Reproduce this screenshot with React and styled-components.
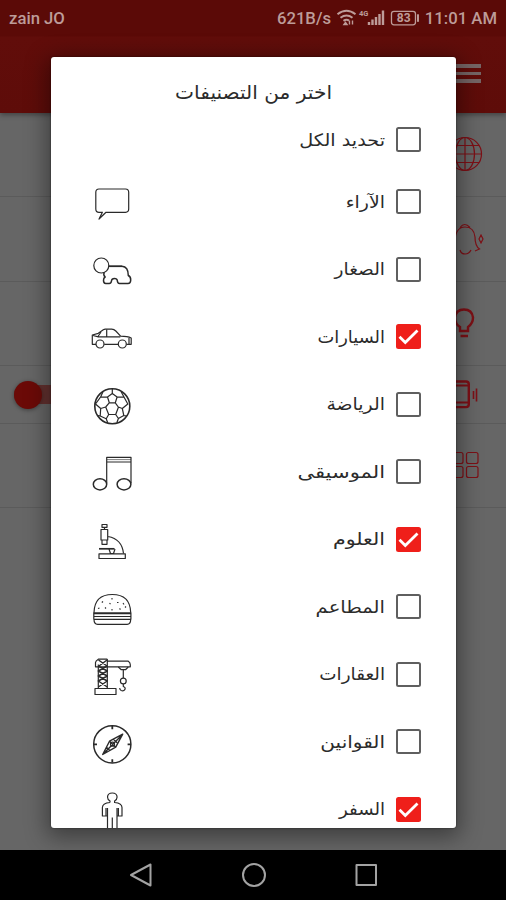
import React from 'react'
import styled, { createGlobalStyle } from 'styled-components'

const GlobalStyle = createGlobalStyle`
    * {
        box-sizing: border-box;
    }

    body {
        margin: 0;
        background: #666;
        overflow: hidden;
    }
`

const categories = [
    { id: 1, label: 'الآراء', icon: 'chat', scale: 1.11 },
    { id: 2, label: 'الصغار', icon: 'bear', scale: 1.09 },
    { id: 3, label: 'السيارات', icon: 'car', checked: true, scale: 1.05 },
    { id: 4, label: 'الرياضة', icon: 'ball', scale: 1.11 },
    { id: 5, label: 'الموسيقى', icon: 'music', scale: 1.24 },
    { id: 6, label: 'العلوم', icon: 'microscope', checked: true, scale: 1.21 },
    { id: 7, label: 'المطاعم', icon: 'burger', scale: 1.15 },
    { id: 8, label: 'العقارات', icon: 'crane', scale: 1.08 },
    { id: 9, label: 'القوانين', icon: 'compass', scale: 1.18 },
    { id: 10, label: 'السفر', icon: 'person', checked: true, scale: 1.07 },
]

const drawings = {
    chat: <path d="M9 7h26.5q3.2 0 3.2 3.2v16.9q0 3.2-3.2 3.2H16L9 37l3.4-6.7H9q-3.2 0-3.2-3.2V10.2q0-3.2 3.2-3.2z" />,
    bear: (
        <>
            <circle cx="11.3" cy="16.5" r="7.5" />
            <path d="M18.8 17.2H32" strokeWidth="1.8" />
            <path d="M32 17.2q6.3.5 6.3 9.3 2.6 1.2 2.4 4.7-.2 3.3-2.7 3.3h-8.500q-2 0-2.200-3-.3-2-2.800-2-2.800 0-3 2.300-.2 2.700-2.300 2.700h-3.500q-2.200 0-2.200-3.200 0-2.500 1.700-3.300-2.200-2-1-4.500" strokeWidth="1.500" />
        </>
    ),
    car: (
        <>
            <path d="M6 27.3H2.300V18l6-1.700 5-3.500q1-.6 2-.6h6.500q2.200 0 4 1.800l4.800 5.200q7 .2 10.600 1.800v6.300h-4.700M14.200 27.300h14" />
            <path d="M3 18.5l5.300 1.300h22M16.700 12.500v7.300M11 15l-3 4.500M39 21v6" />
            <circle cx="10" cy="27" r="4" />
            <circle cx="32.3" cy="27" r="4" />
        </>
    ),
    ball: (
        <>
            <circle cx="22.3" cy="22.200" r="17.500" strokeWidth="1.600" />
            <path d="M22.300 9.500l4.800 3.500-1.800 5.800h-6l-1.800-5.800zM22.300 9.500V4.800M27.100 13l7 .2 3.700 6.800-5.500 4.500-4-1.500-3-4.200M17.500 13l-7 .2L5.500 20l5.200 4.500 5-1.500 3.500-4.200M15.700 23l3 7.500h7l2.800-7.500M18.700 30.500l-2.500 4.200 1.500 4M25.700 30.500l2.700 4-1.500 4M10.700 24.500l-.5 7.500 6 2.700M32.300 24.500l1.500 7-5.400 3M10.500 13.200l2.500-5.500M34.100 13.200L31 7.500M10.200 32l-2.400-.3M33.800 31.500l2.600.3" />
        </>
    ),
    music: (
        <>
            <path d="M16.700 31.500V5.300H41v26M16.700 10H41" />
            <path d="M17 7.600h24" strokeWidth=".6" />
            <ellipse cx="10" cy="32.300" rx="6.700" ry="5.600" strokeWidth="1.500" />
            <ellipse cx="34" cy="32.300" rx="6.900" ry="5.600" strokeWidth="1.500" />
        </>
    ),
    microscope: (
        <>
            <path d="M12 5.500h5v2.800h-5zM11 10.500h6.700V21H11zM12 21h5v4.300h-5zM14.500 8v2.500M18 17.500q14 2.500 15.500 17" />
            <path d="M9 29.800h15.500" strokeWidth="1.700" />
            <path d="M19 30l1.500 4.500h3L25 30M9 34.800h26.300v4.700H9z" />
        </>
    ),
    burger: (
        <>
            <path d="M4 25.500Q4.500 7.500 22.300 7.500T40.700 25.500M4 32.300q0 5 3.600 5h29.500q3.600 0 3.600-5M4.200 32.300h36.500M4 29.500h36.700M3.800 25.500v7M40.900 25.500v7" />
            <path d="M3.800 26.300h37.200" strokeWidth="1.900" />
            <path d="M22 11v1.600M13 14.500l-1.200 1M19.500 16l1 1.200M27 15.500h1.500M33 16l1 1.500M8 21.500l1.500-.5M15 20.500l1 1M22 22v1.500M29.500 21.500l1 1M35 20.500l1-1" strokeWidth="1.100" />
        </>
    ),
    crane: (
        <>
            <path d="M8.300 34V10.500M17.300 34V5M5 34.500h21v6H5zM17.300 7.200h21q2 1.300 2 3.500v2.100H5.500V8.500q0-1.600 2.800-3.300h9" />
            <path d="M8.300 12l9 5-9 5 9 5-9 6M17.300 12l-9 5 9 5-9 5 9 6M8.500 6l8.500 6M17 6l-8 6" strokeWidth="1.500" />
            <path d="M28.300 13l3 2.700h4.200l2.800-2.700M33.300 16v8M33.300 30v2.500q2.700 1 1.500 3.200-1.200 1.700-3.600.8-1.500-.7-1.500-2.500" />
            <circle cx="33.300" cy="27" r="2.900" />
        </>
    ),
    compass: (
        <>
            <circle cx="22.300" cy="22.300" r="18.600" strokeWidth="1.500" />
            <path d="M12.700 32.500L19.500 19.200 32.700 12.200l-7 13zM12.700 32.500l20-20.300M19.500 19.200l6.200 6M16.500 25.200l3 3M23.500 17.200l3.500 3.500" strokeWidth="1.400" />
            <circle cx="22.500" cy="22.200" r="2" />
            <path d="M22.300 4v3.300M22.300 37.300v3.300M3.700 22.300H7M37.600 22.300h3.300" strokeWidth="1.800" />
        </>
    ),
    person: (
        <path d="M20 13.500V12q-2.500-1.500-2.500-4 .3-4 4.800-4t4.800 4q0 2.500-2.500 4v1.500q7.400.6 7.400 5v8.500h-3.600V19M20 13.500q-7.600.6-7.600 5V27H16V19M17.500 19v27M22.300 28.500v17M27 19v27M12.400 27h5M27 27h5" />
    ),
}

const CategoryIcon = ({ name }) => (
    <IconBox viewBox="0 0 44 44">{drawings[name]}</IconBox>
)

const Checkbox = ({ checked }) => (
    <Box $checked={checked}>
        {checked && (
            <svg width="25" height="25" viewBox="0 0 25 25" fill="none" stroke="#fff" strokeWidth="2.8">
                <path d="M3.5 12.800l5.800 5.800L21.500 6.500" />
            </svg>
        )}
    </Box>
)

const StatusIcons = () => (
    <svg width="86" height="22" viewBox="0 0 86 22" fill="none" stroke="#bd9c99">
        {/* wifi */}
        <path d="M1.500 7.200Q10.500.2 19.500 7.200M4.500 10.700q6-4.500 12 0M7.500 13.900q3-2.200 5.500-.3" strokeWidth="2" />
        <path d="M8 17.500l1.500-2 1.500 2zM13.500 13.500v4M16.500 13.500v4" strokeWidth="1.400" />
        {/* signal */}
        <path d="M33 18v-3M36.500 18v-5.500M40 18v-8M43.500 18V7M47 18V3.500" strokeWidth="2.400" />
        {/* battery */}
        <rect x="55.500" y="4.300" width="24" height="13.500" rx="2.500" strokeWidth="1.300" />
        <path d="M82 7.300v7.500" strokeWidth="2" />
        <text x="23" y="9" fontSize="7.500" fontWeight="700" fontFamily="Roboto" fill="#bd9c99" stroke="none">4G</text>
        <text x="60.800" y="15.400" fontSize="12" fontWeight="700" fontFamily="Roboto" fill="#bd9c99" stroke="none">83</text>
    </svg>
)

const App = () => {
    return (
        <>
            <GlobalStyle />
            <Screen>
                <Header>
                    <StatusBar>
                        <Carrier>zain JO</Carrier>
                        <Speed>621B/s</Speed>
                        <StatusIcons />
                        <Clock>11:01 AM</Clock>
                    </StatusBar>
                    <Toolbar>
                        <Burger><i /><i /><i /></Burger>
                    </Toolbar>
                </Header>

                {/* Settings list behind the dialog */}

                <Setting $h={84}>
                    <SettingIcon viewBox="0 0 36 40">
                        <circle cx="17" cy="19" r="16.500" />
                        <ellipse cx="17" cy="19" rx="9.500" ry="16.500" />
                        <path d="M17 2.500v33M.5 19h33M3 10.500h28M3 27.500h28" />
                    </SettingIcon>
                </Setting>
                <Setting $h={84}>
                    <SettingIcon viewBox="0 0 36 40">
                        <path d="M4 31q3-4 3-10Q8 8 17 8q9 0 10 10 0 9 4.500 12L27 32M12 8.500q4.500-6 10 0M12 31q1 4 5 4t6-4M33 16l2 4-2 4-2-4z" />
                    </SettingIcon>
                </Setting>
                <Setting $h={84}>
                    <SettingIcon viewBox="0 0 36 40" $bold>
                        <path d="M12 28v-4q-5-3-5-9.500Q8 6.500 16 6.500t9 8Q25 20.500 20 24v4zM12.500 33h7.500" />
                    </SettingIcon>
                </Setting>
                <Setting $h={58}>
                    <SettingIcon viewBox="0 0 36 40" $bold>
                        <path d="M5 6.500h13q2.800 0 2.800 2.800v20q0 2.800-2.800 2.800H5z" />
                        <path d="M5 10.500h15M5 27.500h15" strokeWidth="1.800" />
                        <path d="M25.500 16v8M28.500 13.500v13" strokeWidth="1.600" />
                    </SettingIcon>
                    <Switch><Knob /></Switch>
                </Setting>
                <Setting $h={84}>
                    <SettingIcon viewBox="0 0 36 40">
                        <rect x="4" y="6.500" width="11" height="11" rx="2" />
                        <rect x="18.500" y="6.500" width="11.500" height="11" rx="2" />
                        <rect x="4" y="20.500" width="11" height="11" rx="2" />
                        <rect x="18.500" y="20.500" width="11.500" height="11" rx="2" />
                    </SettingIcon>
                </Setting>
                <Filler />

                <NavBar>
                    <svg width="24" height="26" viewBox="0 0 24 26"><path d="M21.500 2.500v21L2 13z" /></svg>
                    <svg width="26" height="26" viewBox="0 0 26 26"><circle cx="13" cy="13" r="11" /></svg>
                    <svg width="24" height="26" viewBox="0 0 24 26"><rect x="2.500" y="3" width="19.500" height="20" /></svg>
                </NavBar>

                <Dialog>
                    <Title><Label $scale={1.06}>اختر من التصنيفات</Label></Title>
                    <SelectAll>
                        <Checkbox />
                        <Label $scale={1.13}>تحديد الكل</Label>
                    </SelectAll>
                    {categories.map((val) => (
                        <Row key={val.id}>
                            <Checkbox checked={val.checked} />
                            <Label $scale={val.scale}>{val.label}</Label>
                            <CategoryIcon name={val.icon} />
                        </Row>
                    ))}
                </Dialog>
            </Screen>
        </>
    )
}

const Screen = styled.div`
    position: relative;
    display: flex;
    flex-direction: column;
    width: 506px;
    height: 900px;
    overflow: hidden;
    background: #666;
    direction: rtl;
    font-family: "DejaVu Sans", sans-serif;
`

const Header = styled.header`
    height: 113px;
    flex-shrink: 0;
    background: linear-gradient(#5b0a07 0, #5b0a07 36px, #610d0a 37px, #5e0c09 100%);
    box-shadow: 0 2px 5px rgba(0, 0, 0, 0.35);
`

const StatusBar = styled.div`
    display: flex;
    align-items: center;
    height: 36px;
    padding: 0 9px;
    direction: ltr;
    color: #bd9c99;
    font-family: Roboto, sans-serif;
    font-size: 16.700px;
    font-weight: 500;
    white-space: nowrap;
`

const Carrier = styled.span`
    width: 268px;
`

const Speed = styled.span`
    width: 59px;
`

const Clock = styled.span`
    margin-left: 3px;
`

const Toolbar = styled.div`
    display: flex;
    padding: 28px 25px;
`

const Burger = styled.div`
    display: flex;
    flex-direction: column;
    gap: 4px;
    width: 32px;

    i {
        height: 3.500px;
        background: #756565;
    }
`

const Setting = styled.div`
    display: flex;
    align-items: center;
    justify-content: space-between;
    flex-shrink: 0;
    height: ${(props) => props.$h + 0.3}px;
    padding: 0 22px 0 14px;
    border-bottom: 1px solid #5b5b5b;
`

const SettingIcon = styled.svg`
    width: 36px;
    height: 40px;
    fill: none;
    stroke: #7d1016;
    stroke-width: ${(props) => (props.$bold ? 2.4 : 1.2)};
`

const Switch = styled.div`
    width: 48px;
    height: 19px;
    border-radius: 10px;
    background: #653230;
    display: flex;
    align-items: center;
    justify-content: flex-end;
`

const Knob = styled.div`
    width: 28px;
    height: 28px;
    border-radius: 50%;
    background: #6b0a07;
    box-shadow: 0 1px 4px rgba(0, 0, 0, 0.4);
    flex-shrink: 0;
`

const Filler = styled.div`
    flex: 1;
`

const NavBar = styled.nav`
    display: flex;
    direction: ltr;
    align-items: center;
    justify-content: space-between;
    height: 50px;
    padding: 0 128px 0 129px;
    background: #000;

    svg {
        fill: none;
        stroke: #a3a3a3;
        stroke-width: 2;
        stroke-linejoin: round;
    }
`

const Dialog = styled.div`
    position: absolute;
    top: 57px;
    left: 51px;
    width: 405px;
    height: 771px;
    overflow: hidden;
    border-radius: 3px;
    background: #fff;
    box-shadow: 0 5px 22px 4px rgba(0, 0, 0, 0.4), 0 0 2px rgba(0, 0, 0, 0.6);
`

const Title = styled.div`
    display: flex;
    align-items: center;
    height: 56px;
    padding: 14px 124px 0 0;
`

const SelectAll = styled.div`
    display: flex;
    align-items: center;
    height: 55px;
    padding: 0 35px 2px;
`

const Row = styled.div`
    display: flex;
    align-items: center;
    height: 67.5px;
    padding: 0 35px 0 39px;
`

const Label = styled.span`
    flex: 1;
    margin-right: 11px;
    color: #2b2b2b;
    font-size: 17px;
    line-height: 28px;
    white-space: nowrap;
    transform: scaleX(${(props) => props.$scale});
    transform-origin: right center;

    ${Title} & {
        margin: 0;
        font-size: 19px;
    }
`

const Box = styled.div`
    width: 25px;
    height: 25px;
    flex-shrink: 0;
    border: ${(props) => (props.$checked ? 'none' : '2px solid #5f5f5f')};
    border-radius: 2.5px;
    background: ${(props) => (props.$checked ? '#ef1f1a' : '#fff')};
`

const IconBox = styled.svg`
    width: 44px;
    height: 44px;
    flex-shrink: 0;
    margin-top: 4px;
    fill: none;
    stroke: #2a2a2a;
    stroke-width: 1.2;
    stroke-linejoin: round;
`

export default App
